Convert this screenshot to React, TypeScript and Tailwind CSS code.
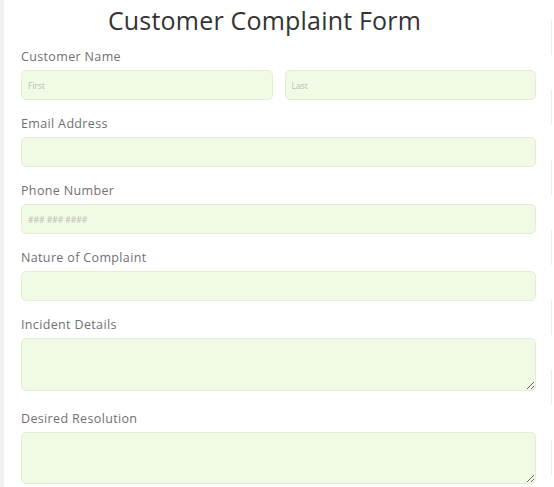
import type { ReactNode } from "react";

const font = { fontFamily: "'Open Sans', 'Liberation Sans', sans-serif" };

const labelCls = "block text-[12.5px] leading-4 tracking-[0.35px] text-[#707070] mb-[5px]";

function Field({ label, children, last }: { label: string; children: ReactNode; last?: boolean }) {
  return (
    <div className={last ? "" : "mb-[16px]"}>
      <label className={labelCls}>{label}</label>
      {children}
    </div>
  );
}

const inputCls =
  "block w-full h-[30px] rounded-[5px] border border-[#e3eed3] bg-[#f1fae4] px-[6px] text-[8.5px] text-[#555] placeholder:text-[#b9bdb3] outline-none";

const areaCls =
  "block w-full rounded-[5px] border border-[#e3eed3] bg-[#f1fae4] px-[6px] py-1 text-[8.5px] text-[#555] outline-none resize-y";

export default function App() {
  return (
    <div className="flex w-[554px] h-[487px] overflow-hidden bg-white" style={font}>
      <div className="w-[4px] shrink-0 bg-[#f1f2f4]" />
      <div className="flex-1 pl-[17px] pr-[15px] pt-[4px]">
        <h1 className="text-center text-[25px] leading-8 text-[#333] mb-[13px] pr-[28px] tracking-[0.2px]">
          Customer Complaint Form
        </h1>

        <Field label="Customer Name">
          <div className="flex gap-[12px]">
            <input className={inputCls} placeholder="First" />
            <input className={inputCls} placeholder="Last" />
          </div>
        </Field>

        <Field label="Email Address">
          <input className={inputCls} />
        </Field>

        <Field label="Phone Number">
          <input className={inputCls} placeholder="### ### ####" />
        </Field>

        <Field label="Nature of Complaint">
          <input className={inputCls} />
        </Field>

        <div className="mb-[20px]">
          <label className={labelCls}>Incident Details</label>
          <textarea className={`${areaCls} h-[53px]`} />
        </div>

        <Field label="Desired Resolution" last>
          <textarea className={`${areaCls} h-[52px]`} />
        </Field>
      </div>
      <div className="w-[3px] shrink-0 flex flex-col gap-[35px] pt-[20px]">
        {[0, 1, 2, 3, 4, 5, 6].map((i) => (
          <div key={i} className="h-[35px] border-l border-[#ececec]" />
        ))}
      </div>
    </div>
  );
}
